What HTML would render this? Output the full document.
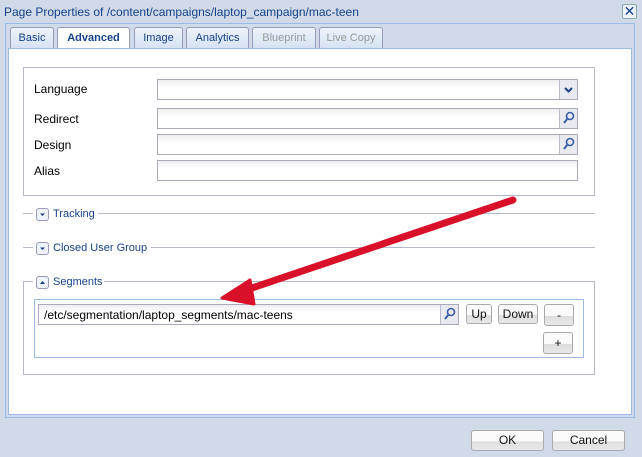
<!DOCTYPE html><html><head><style>
body{margin:0;width:642px;height:457px;background:#d0dae8;font-family:"Liberation Sans",sans-serif;font-size:12px;position:relative;overflow:hidden}
.a{position:absolute}
.inp{position:absolute;border:1px solid #aab;background:linear-gradient(#eee,#fff 40%);box-sizing:border-box}
.trig{position:absolute;right:0;top:0;bottom:0;width:17px;border-left:1px solid #bbc;background:#e8eaf0}
.btn{position:absolute;border:1px solid #aaa;border-radius:3px;background:linear-gradient(#fafafa 55%,#ddd 56%,#e8e8e8);box-sizing:border-box;text-align:center;font-size:12px;color:#111}
.tab{position:absolute;top:27px;height:21px;border:1px solid #99b;border-bottom:none;background:linear-gradient(#eef3fb,#d6e2f4);box-sizing:border-box;text-align:center;line-height:21px;color:#15428b;font-size:11px;border-radius:3px 3px 0 0}
.lbl{position:absolute;left:34px;font-size:12px;color:#000}
.tg{position:absolute;width:13px;height:13px;border:1px solid #99b;border-radius:3px;background:#eef2fa;box-sizing:border-box}
.leg{position:absolute;font-size:11px;color:#15428b}
</style></head><body>
<div class="a" style="left:4px;top:5px;font-size:12px;color:#15428b">Page Properties of /content/campaigns/laptop_campaign/mac-teen</div>
<div class="a" style="left:622px;top:4px;width:15px;height:15px;border:1px solid #8aa;border-radius:2px;background:#eef3fb;box-sizing:border-box;text-align:center;line-height:12px;color:#15428b;font-size:14px">✕</div>
<div class="a" style="left:5px;top:23px;width:630px;height:395px;border:1px solid #99bbe8;box-sizing:border-box"></div>
<div class="tab" style="left:10px;width:44px">Basic</div>
<div class="tab" style="left:57px;width:73px;background:#fff;font-weight:bold;height:22px">Advanced</div>
<div class="tab" style="left:134px;width:49px">Image</div>
<div class="tab" style="left:186px;width:63px">Analytics</div>
<div class="tab" style="left:252px;width:64px;color:#999">Blueprint</div>
<div class="tab" style="left:319px;width:64px;color:#999">Live Copy</div>
<div class="a" style="left:8px;top:48px;width:624px;height:367px;background:#fff;border:1px solid #99bbe8;box-sizing:border-box"></div>
<div class="a" style="left:23px;top:67px;width:572px;height:129px;border:1px solid #b5b8c8;box-sizing:border-box"></div>
<div class="lbl" style="top:82px">Language</div>
<div class="inp" style="left:157px;top:79px;width:421px;height:21px"><div class="trig"><svg width="17" height="19"><path d="M5 8l3.5 3.5L12 8" stroke="#15428b" stroke-width="2" fill="none"/></svg></div></div>
<div class="lbl" style="top:112px">Redirect</div>
<div class="inp" style="left:157px;top:108px;width:421px;height:21px"><div class="trig"><svg width="17" height="19"><circle cx="10" cy="7" r="3.5" stroke="#3a5fa8" stroke-width="1.6" fill="none"/><path d="M7.5 9.5L4 14" stroke="#3a5fa8" stroke-width="2"/></svg></div></div>
<div class="lbl" style="top:138px">Design</div>
<div class="inp" style="left:157px;top:134px;width:421px;height:21px"><div class="trig"><svg width="17" height="19"><circle cx="10" cy="7" r="3.5" stroke="#3a5fa8" stroke-width="1.6" fill="none"/><path d="M7.5 9.5L4 14" stroke="#3a5fa8" stroke-width="2"/></svg></div></div>
<div class="lbl" style="top:164px">Alias</div>
<div class="inp" style="left:157px;top:160px;width:421px;height:21px"></div>
<div class="a" style="left:23px;top:213px;width:572px;border-top:1px solid #b5b8c8"></div>
<div class="a" style="left:33px;top:206px;width:65px;height:16px;background:#fff"></div>
<div class="tg" style="left:36px;top:208px"><svg width="11" height="11"><path d="M3 4.5h5L5.5 7z" fill="#15428b"/></svg></div>
<div class="leg" style="left:53px;top:208px">Tracking</div>
<div class="a" style="left:23px;top:247px;width:572px;border-top:1px solid #b5b8c8"></div>
<div class="a" style="left:33px;top:240px;width:118px;height:16px;background:#fff"></div>
<div class="tg" style="left:36px;top:242px"><svg width="11" height="11"><path d="M3 4.5h5L5.5 7z" fill="#15428b"/></svg></div>
<div class="leg" style="left:53px;top:242px">Closed User Group</div>
<div class="a" style="left:23px;top:281px;width:572px;height:94px;border:1px solid #b5b8c8;box-sizing:border-box"></div>
<div class="a" style="left:33px;top:274px;width:71px;height:16px;background:#fff"></div>
<div class="tg" style="left:36px;top:276px"><svg width="11" height="11"><path d="M3 7h5L5.5 4z" fill="#15428b"/></svg></div>
<div class="leg" style="left:53px;top:276px">Segments</div>
<div class="a" style="left:34px;top:299px;width:550px;height:59px;border:1px solid #99bbe8;box-sizing:border-box"></div>
<div class="inp" style="left:38px;top:304px;width:421px;height:21px;padding:3px 5px;font-size:12px">/etc/segmentation/laptop_segments/mac-teens<div class="trig"><svg width="17" height="19"><circle cx="10" cy="7" r="3.5" stroke="#3a5fa8" stroke-width="1.6" fill="none"/><path d="M7.5 9.5L4 14" stroke="#3a5fa8" stroke-width="2"/></svg></div></div>
<div class="btn" style="left:466px;top:304px;width:26px;height:20px;line-height:18px">Up</div>
<div class="btn" style="left:498px;top:304px;width:40px;height:20px;line-height:18px">Down</div>
<div class="btn" style="left:544px;top:304px;width:30px;height:22px;line-height:20px">-</div>
<div class="btn" style="left:543px;top:332px;width:30px;height:22px;line-height:20px">+</div>
<div class="btn" style="left:471px;top:430px;width:73px;height:21px;line-height:19px;font-size:12px">OK</div>
<div class="btn" style="left:552px;top:430px;width:73px;height:21px;line-height:19px;font-size:12px">Cancel</div>
<svg class="a" style="left:0;top:0" width="642" height="457"><path d="M513 200L240 292" stroke="#d8102a" stroke-width="7" stroke-linecap="round"/><path d="M222 298L250 280L254 304z" fill="#d8102a" stroke="#d8102a" stroke-width="3" stroke-linejoin="round"/></svg>
</body></html>
